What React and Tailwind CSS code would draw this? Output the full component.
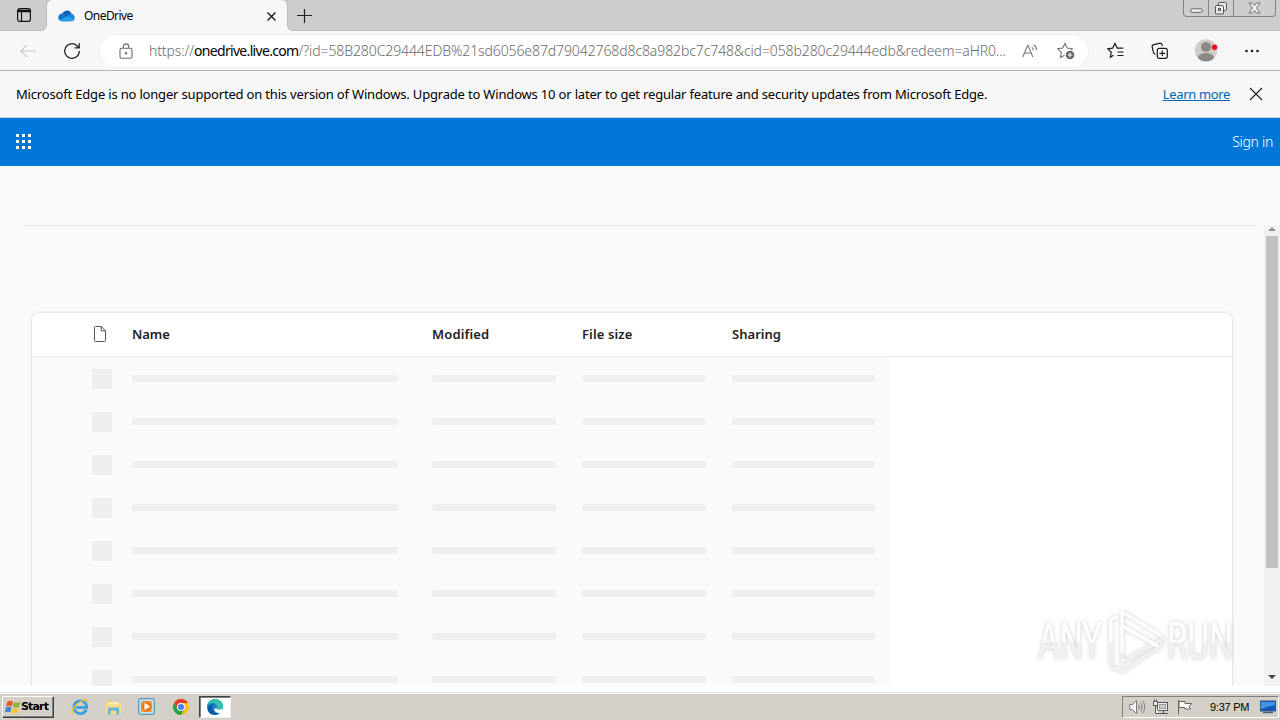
import React from 'react';

const columns = [
    { label: 'Name', cell: 'w-[300px]', bar: 'w-[266px]', tracking: 'tracking-[-0.05px]' },
    { label: 'Modified', cell: 'w-[150px]', bar: 'w-[124px]', tracking: 'tracking-[0.15px]' },
    { label: 'File size', cell: 'w-[150px]', bar: 'w-[124px]', tracking: 'tracking-[0.12px]' },
    { label: 'Sharing', cell: 'w-[158px]', bar: 'w-[143px]', tracking: 'tracking-[0.03px]' },
];

const rows = [0, 1, 2, 3, 4, 5, 6, 7];

const CloudIcon = () => (
    <svg className="w-[17px] h-[12px]" viewBox="0 0 17 12">
        <path d="M4 4.5C5 1.5 7.200 .5 9 .5c2.400 0 4 1.400 4.600 3.300L10 7.500 3 8z" fill="#0d5fb5" />
        <path d="M4.300 3.600C1.900 3.600.3 5.300.3 7.500c0 1.200.5 2.200 1.400 2.900L10.500 6.800 7.200 4.600C6.300 4 5.400 3.600 4.300 3.600z" fill="#1277cc" />
        <path d="M13.200 3.800c-1.100 0-2 .4-2.700 1L8.300 6.500l7.400 3.800c.7-.6 1-1.500 1-2.500 0-2.300-1.400-4-3.500-4z" fill="#1989d9" />
        <path d="M1.500 10.200C2.300 11 3.300 11.500 4.500 11.500h8.700c1.200 0 2.100-.5 2.700-1.300L9.700 6.500z" fill="#28a1e8" />
    </svg>
);

const TabBar = () => (
    <div className="h-[31px] flex bg-[#cdcdcd]">
        <div className="w-[47px] bg-[#f7f7f7]">
            <div className="h-[31px] w-[47px] bg-[#cdcdcd] rounded-br-[6px] border-r border-b border-[#bdbdbd] flex items-center pl-4">
                <svg className="size-4" viewBox="0 0 16 16" fill="none" stroke="#111">
                    <rect x="1.600" y="1.600" width="12.800" height="12.800" rx="2.200" strokeWidth="1.200" />
                    <path d="M2 3.500h12M2 4.500h12" strokeWidth="1.600" />
                    <path d="M5.500 5v9" strokeWidth="1.100" />
                </svg>
            </div>
        </div>
        <div className="w-[240px] bg-[#f7f7f7] rounded-t-[6px] flex items-center pl-[11px] pr-[10px]">
            <CloudIcon />
            <span className="ml-[9px] text-[12px] leading-[16px] tracking-[-0.55px] text-black">OneDrive</span>
            <svg className="ml-auto size-[11px] mt-px" viewBox="0 0 11 11" stroke="#111" strokeWidth="1.300">
                <path d="M1.500 1.500l8 8M9.500 1.500l-8 8" />
            </svg>
        </div>
        <div className="flex-1 bg-[#f7f7f7]">
            <div className="h-[31px] bg-[#cdcdcd] rounded-bl-[6px] border-l border-b border-[#bdbdbd] flex justify-between">
                <svg className="ml-[8px] mt-2 size-4" viewBox="0 0 16 16" stroke="#222" strokeWidth="1.200">
                    <path d="M8.500 1v14M1 7.500h15" />
                </svg>
                <div className="h-[17px] w-[93px] mr-1 flex border border-t-0 border-[#858585] rounded-b-[4px] text-[#666]">
                    <div className="w-[25px] flex justify-center border-r border-[#858585]">
                        <svg className="w-[13px] h-[16px]" viewBox="0 0 13 16">
                            <rect x=".8" y="8.800" width="11.400" height="3.600" rx="1.400" fill="#eee" stroke="#666" />
                        </svg>
                    </div>
                    <div className="w-[25px] flex justify-center border-r border-[#858585]">
                        <svg className="w-[14px] h-[16px]" viewBox="0 0 14 16" fill="#e8e8e8" stroke="#555">
                            <rect x="4.500" y="2.500" width="8" height="8" rx="1" />
                            <rect x="1.500" y="5.500" width="8" height="8.500" rx="1" />
                            <rect x="4.500" y="8.500" width="2" height="2" />
                        </svg>
                    </div>
                    <div className="flex-1 flex justify-center">
                        <svg className="w-[13px] h-[16px]" viewBox="0 0 13 16" fill="#eee" stroke="#666" strokeWidth=".9">
                            <path d="M1 3h3.500l2 2.500L8.500 3H12L8.500 8l3.500 5H8.500l-2-2.500-2 2.500H1l3.500-5z" />
                        </svg>
                    </div>
                </div>
            </div>
        </div>
    </div>
);

const Toolbar = () => (
    <div className="h-10 flex items-center bg-[#f7f7f7] border-b border-[#b5b5b5]">
        <svg className="ml-5 w-4 h-[14px]" viewBox="0 0 16 14" fill="none" stroke="#c9c9c9" strokeWidth="1.100">
            <path d="M7 .8L.9 7 7 13.200M1 7h15" />
        </svg>
        <svg className="ml-[27px] size-[18px]" viewBox="0 0 18 18" fill="none" stroke="#222" strokeWidth="1.300">
            <path d="M16.300 9A7.300 7.300 0 1 1 14 3.700l2 2M16.200 1.200v4.600h-4.600" />
        </svg>
        <div className="ml-[19px] w-[988px] h-[32px] bg-white rounded-full ring-1 ring-[#f0f0f0] flex items-center pl-[19px] pr-[13px]">
            <svg className="w-[14px] h-[16px]" viewBox="0 0 14 16" fill="none" stroke="#6c6c6c" strokeWidth="1.100">
                <rect x="1" y="5.200" width="12" height="10" rx="1.500" />
                <path d="M4.300 5V3.600a2.700 2.700 0 0 1 5.400 0V5" />
                <circle cx="7" cy="10.200" r=".7" fill="#6c6c6c" />
            </svg>
            <span className="ml-4 text-[14px] leading-[20px] whitespace-nowrap text-[#6a6a6a] font-light">
                <span className="tracking-[-0.12px]">https://</span>
                <span className="text-black font-normal tracking-[-0.68px]">onedrive.live.com</span>
                <span className="tracking-[-0.1px]">/?id=58B280C29444EDB%21sd6056e87d79042768d8c8a982bc7c748&amp;cid=058b280c29444edb&amp;redeem=aHR0...</span>
            </span>
            <svg className="ml-auto w-4 h-[16px] shrink-0" viewBox="0 0 16 16" fill="none" stroke="#777" strokeWidth="1.050">
                <path d="M.8 14L5.500 2.500h.6L10.800 14M2.400 10h6.800M9.700 4.200c1 .7 1.500 1.700 1.500 3M11.600 1.800c2 1.200 3 3 3 5.300" />
            </svg>
            <svg className="ml-[19px] w-[18px] h-[18px] shrink-0" viewBox="0 0 18 18" fill="none" stroke="#707070" strokeWidth="1.100">
                <path d="M7.500 13.200l-4 2.200.8-5L.8 6.800l4.900-.7L8 1.500l2.300 4.600 5 .7-1.500 1.400" />
                <circle cx="13" cy="13" r="4.300" fill="#666" stroke="none" />
                <path d="M13 10.700v4.600M10.700 13h4.600" stroke="#fff" />
            </svg>
        </div>
        <svg className="ml-[19px] w-[17px] h-[17px]" viewBox="0 0 17 17" fill="none" stroke="#1a1a1a" strokeWidth="1.200">
            <path d="M6.500 13.200l-3.200 2.100.9-5L.8 6.800l4.800-.7L8 1.500l2.200 4.600h6M10.500 10h6M10.500 13.500h6" />
        </svg>
        <svg className="ml-[27px] w-[18px] h-[18px]" viewBox="0 0 18 18" fill="none" stroke="#1a1a1a" strokeWidth="1.200">
            <rect x="6.300" y="6.300" width="10" height="10" rx="2" />
            <path d="M11.300 8.500v5.600M8.500 11.300h5.600M4.300 12.500C3 11.700 2.600 11 2.300 9.800L1.200 5.200c-.3-1.300.4-2.300 1.600-2.600l5.500-1.300c1.300-.3 2.300.3 2.700 1.500l.3 1.400" />
        </svg>
        <svg className="ml-[25px] w-[25px] h-[23px]" viewBox="0 0 25 23">
            <circle cx="12" cy="11.500" r="11.200" fill="#cfcdca" />
            <circle cx="12" cy="8" r="5" fill="#8b8886" />
            <ellipse cx="12" cy="18.200" rx="7.800" ry="4.100" fill="#8b8886" />
            <circle cx="20.500" cy="8.300" r="3.200" fill="#e3121f" stroke="#f7f7f7" strokeWidth=".6" />
        </svg>
        <svg className="ml-[25px] w-4 h-4" viewBox="0 0 16 16" fill="#1a1a1a">
            <circle cx="2.500" cy="8" r="1.300" />
            <circle cx="8" cy="8" r="1.300" />
            <circle cx="13.500" cy="8" r="1.300" />
        </svg>
    </div>
);

const NoticeBar = () => (
    <div className="h-[47px] flex items-center bg-[#f7f7f7] border-b border-[#b9cde0] pl-4 pr-[17px] text-[13px] leading-[18px] text-black">
        <span className="pb-px whitespace-nowrap tracking-[-0.179px]">
            Microsoft Edge is no longer supported on this version of Windows. Upgrade to Windows 10 or later to get regular feature and security updates from Microsoft Edge.
        </span>
        <a className="ml-auto pb-px underline tracking-[-0.35px] text-[#0066b4] whitespace-nowrap" href="#more">Learn more</a>
        <svg className="ml-[19px] size-[14px]" viewBox="0 0 14 14" stroke="#222" strokeWidth="1.200">
            <path d="M1 1l12 12M13 1L1 13" />
        </svg>
    </div>
);

const SuiteHeader = () => (
    <div className="h-12 flex items-center justify-between bg-[#0078d7] pl-4 pr-[7px]">
        <div className="grid grid-cols-3 gap-[3px] mb-px">
            {[0, 1, 2, 3, 4, 5, 6, 7, 8].map((i) => (
                <span key={i} className="size-[3px] bg-white" />
            ))}
        </div>
        <span className="text-[14px] leading-[20px] tracking-[-0.3px] font-light text-white">Sign in</span>
    </div>
);

const FileList = () => (
    <div className="ml-8 mt-[87px] w-[1200px] bg-white rounded-t-[7px] shadow-[0_0_3px_rgba(0,0,0,0.2)]">
        <div className="h-11 flex items-center border-b border-[#eeeeee] pb-[2px]">
            <div className="w-[100px] pl-[61px] shrink-0">
                <svg className="w-[14px] h-[18px]" viewBox="0 0 14 18" fill="none" stroke="#555" strokeWidth="1">
                    <path d="M2.500 1.500h5.700l4.300 4.300v9.700a1 1 0 0 1-1 1h-9a1 1 0 0 1-1-1v-13a1 1 0 0 1 1-1zM8.200 1.500v4.300h4.300" />
                </svg>
            </div>
            {columns.map((col) => (
                <div key={col.label} className={`${col.cell} ${col.tracking} text-[13px] leading-[18px] font-semibold text-[#222]`}>
                    {col.label}
                </div>
            ))}
        </div>
        <div className="w-[858px] bg-[#fafafa]">
            {rows.map((row) => (
                <div key={row} className="h-[43px] flex items-center">
                    <div className="w-[100px] pl-[60px] pt-px shrink-0">
                        <div className="size-5 bg-[#efefef]" />
                    </div>
                    {columns.map((col) => (
                        <div key={col.label} className={`${col.cell} shrink-0`}>
                            <div className={`${col.bar} h-[7px] rounded-[2px] bg-[#efefef]`} />
                        </div>
                    ))}
                </div>
            ))}
        </div>
    </div>
);

const Scrollbar = () => (
    <div className="w-4 flex flex-col items-center bg-[#f1f1f1]">
        <svg className="h-[10px] w-4 shrink-0" viewBox="0 0 16 10">
            <path d="M4 5l4-4 4 4z" fill="#8d8d8d" />
        </svg>
        <div className="h-[332px] w-3 bg-[#c1c1c1]" />
        <svg className="mt-auto h-[17px] w-4" viewBox="0 0 16 17">
            <path d="M4 6l4 4 4-4z" fill="#444" />
        </svg>
    </div>
);

const Watermark = () => (
    <svg
        className="absolute left-[1030px] top-[602px] w-[210px] h-[78px] overflow-visible drop-shadow-[0_0_2px_rgba(0,0,0,0.2)]"
        viewBox="0 0 210 78"
    >
        <defs>
            <linearGradient id="markFill" x1="0" y1="0" x2="0" y2="1">
                <stop offset="0.5" stopColor="#ffffff" />
                <stop offset="0.52" stopColor="#f0f0f0" />
            </linearGradient>
        </defs>
        <g fill="url(#markFill)" fontFamily="Roboto, sans-serif">
            <text transform="translate(8 57) scale(.66 1.120)" fontSize="46" textLength="97" lengthAdjust="spacingAndGlyphs">ANY</text>
            <text transform="translate(137 57) scale(.66 1.120)" fontSize="46" textLength="100" lengthAdjust="spacingAndGlyphs">RUN</text>
        </g>
        <g fill="none" strokeWidth="3.200" strokeLinejoin="round">
            <path d="M92 50V10L132 34" stroke="#fff" />
            <path d="M92 50V60L132 38M81 40V63M81 65l12 4L132 43M132 34v9" stroke="#f0f0f0" />
            <path d="M81 40V17l7-2M92 24l36 20" stroke="#fff" />
        </g>
    </svg>
);

const StartButton = () => (
    <div className="ml-[2px] w-[52px] h-[22px] flex items-center pl-[2px] bg-[#d4d0c8] border border-t-white border-l-white border-r-[#404040] border-b-[#404040] shadow-[inset_-1px_-1px_0_#808080]">
        <svg className="size-4 shrink-0" viewBox="0 0 16 16">
            <path d="M2.500 2.500c2-1.200 3.500-1 5.500 0L6.800 7.400C5 6.500 3.200 6.500 1 7.500z" fill="#e9592b" />
            <path d="M9 3c2 1 4 1 6.500-.3L14 7.700c-2 1.100-4 1.200-6.200.2z" fill="#83b93b" />
            <path d="M.8 8.500c2.200-1.100 3.900-1 5.700 0L5.200 13.300C3.500 12.500 1.700 12.600 0 13.500z" fill="#3d86d3" />
            <path d="M7.500 9c2 .9 4 .9 6.300-.3l-1.400 4.900c-2.200 1.200-4 1.200-6.200.1z" fill="#f6c429" />
        </svg>
        <span className="font-['DejaVu_Sans',sans-serif] font-bold text-[11px] leading-[14px] tracking-[-0.85px] text-black">Start</span>
    </div>
);

const Taskbar = () => (
    <div className="h-7 flex items-center bg-[#d4d0c8] border-t border-[#e6e3de] shadow-[inset_0_1px_0_#fff]">
        <StartButton />
        <svg className="ml-[17px] size-[18px]" viewBox="0 0 18 18" fill="none">
            <path d="M15.300 11.500A6.400 6.400 0 1 1 15.700 9.500H5" stroke="#2e9fe0" strokeWidth="2.600" />
            <path d="M2 16.500C-.5 14 3 8 8 4.500S18.500.5 16 5.500" stroke="#f0bd3a" strokeWidth="1.500" />
        </svg>
        <svg className="ml-4 w-[17px] h-[18px]" viewBox="0 0 18 18">
            <path d="M2 2h5l1 2h8v11H2z" fill="#edc95b" />
            <path d="M3 4h12v5H3z" fill="#fff3b5" />
            <path d="M1 6h16v10H1z" fill="#f6df88" />
            <path d="M3 17v-6c0-1 .7-1.500 1.500-1.500h9c.8 0 1.500.5 1.500 1.500v6h-3v-4H6v4z" fill="#68b8dc" />
        </svg>
        <svg className="ml-4 w-[17px] h-[17px]" viewBox="0 0 17 17">
            <rect x=".7" y=".7" width="15.600" height="15.600" rx="1" fill="#bfe0ef" stroke="#438cb4" />
            <rect x="3" y="3" width="11" height="11" fill="#f7a845" />
            <circle cx="8.500" cy="8.500" r="5.200" fill="#ef7610" />
            <path d="M6.500 4.700v7.600l5.700-3.800z" fill="#fff" />
        </svg>
        <svg className="ml-[18px] size-4" viewBox="0 0 16 16">
            <circle cx="8" cy="8" r="8" fill="#fbc116" />
            <path d="M1.070 4A8 8 0 0 1 14.930 4H8L4.540 10z" fill="#e33b2e" />
            <path d="M1.070 4A8 8 0 0 0 8 16l3.460-6H4.540z" fill="#29a04b" />
            <circle cx="8" cy="8" r="4" fill="#fff" />
            <circle cx="8" cy="8" r="3.100" fill="#4283ee" />
        </svg>
        <div className="ml-[10px] w-8 h-[22px] bg-white border border-t-[#404040] border-l-[#404040] border-r-[#eeeeee] border-b-[#eeeeee] shadow-[inset_1px_1px_0_#808080] flex items-center justify-center">
            <svg className="size-4" viewBox="0 0 16 16">
                <circle cx="8" cy="8" r="8" fill="#1681ca" />
                <path d="M.2 7C.8 2.700 4 0 8 0c4.600 0 8 3.200 8 6.700 0 2.500-1.800 4.100-4.200 4.100-1.500 0-2.500-.5-2.500-1 0-.6.800-.9.800-2.300C10.100 5.700 8.300 4 5.600 4 3 4 1.200 5.300.2 7z" fill="#35c2a5" />
                <path d="M5.500 7.500C4.300 11 7 14.800 11.500 14.300 8 17 3.500 16 1.300 12.500-.5 8.500 2.500 5 6.500 5.500c-.5.500-.8 1.200-1 2z" fill="#0c59a4" />
                <path d="M9.600 9.100c-.5.800 .3 1.700 2.200 1.700 1.300 0 2.400-.4 3.200-1.200l1 3-2 1.500c-3.500.7-6.600-1-6.800-4z" fill="#fff" />
            </svg>
        </div>
        <div className="ml-auto mr-px w-[157px] h-[22px] flex items-center border border-t-[#808080] border-l-[#808080] border-r-white border-b-white pl-[6px]">
            <svg className="w-[17px] h-4" viewBox="0 0 17 16" fill="#fff" stroke="#777">
                <path d="M.8 5.500h2.700L7.500 1.500v13l-4-4H.8z" />
                <path d="M9.500 5.500c1 1.500 1 3.500 0 5M11.500 3.800c2 2.500 2 6 0 8.500M13.500 2c3 3.500 3 8.500 0 12" fill="none" />
            </svg>
            <svg className="ml-[7px] w-[17px] h-4" viewBox="0 0 17 16" fill="#f2f2f2" stroke="#555">
                <rect x="4.500" y="3.500" width="10" height="8" />
                <rect x="6.500" y="5.500" width="6" height="4" fill="#ccc" stroke="#999" />
                <path d="M6 14.500h9M10.500 12v2M.5 2.500h4v4h-4zM1.500.5v2M3.500.5v2M2.500 7v7.500H6" />
            </svg>
            <svg className="ml-[7px] w-4 h-4" viewBox="0 0 16 16" fill="#fff" stroke="#666">
                <path d="M1.500 1v14.500M2 2.500h6v2h6.500L12 7.500l1.500 2.500H8V8.500H2z" />
            </svg>
            <span className="ml-[17px] whitespace-nowrap font-['Liberation_Sans',sans-serif] text-[11px] leading-[14px] tracking-[-0.25px] text-black">9:37 PM</span>
            <svg className="ml-auto mr-[2px] w-4 h-[14px]" viewBox="0 0 16 14">
                <rect x=".5" y="1" width="15" height="10" fill="#1457b5" stroke="#31588d" />
                <path d="M1 2h14v3L1 9z" fill="#4094e2" />
                <path d="M3 12.500h10" stroke="#48627c" strokeWidth="1.500" />
            </svg>
        </div>
    </div>
);

const App = () => {
    return (
        <div className="relative w-[1280px] h-[720px] overflow-hidden flex flex-col bg-[#fafafa] font-['Noto_Sans','Open_Sans',sans-serif]">
            <TabBar />
            <Toolbar />
            <NoticeBar />
            <SuiteHeader />
            <div className="h-[60px] px-6 flex flex-col justify-end">
                <div className="h-px bg-[#e6e6e6]" />
            </div>
            <div className="h-[460px] flex overflow-hidden">
                <div className="w-[1264px] overflow-hidden">
                    <FileList />
                </div>
                <Scrollbar />
            </div>
            <div className="h-[6px] bg-white" />
            <Taskbar />
            <Watermark />
        </div>
    );
};

export default App;
